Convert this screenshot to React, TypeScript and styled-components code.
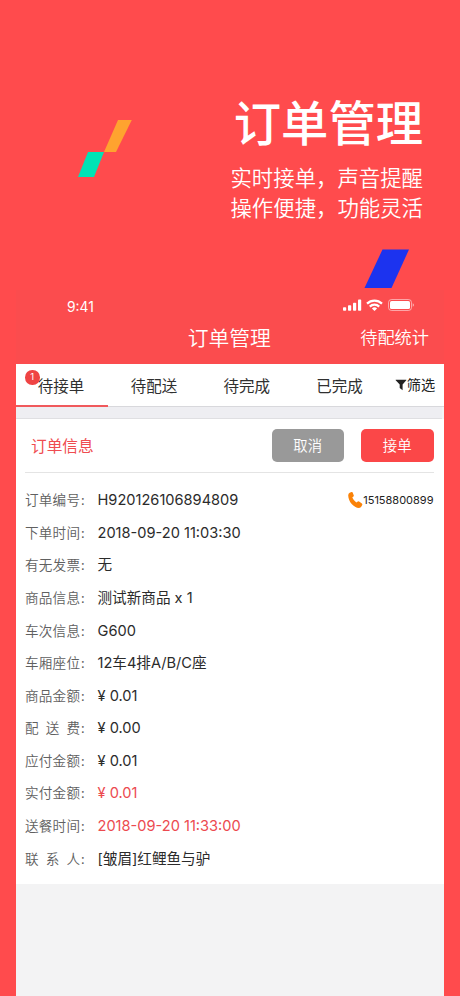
import React from "react";
import styled, { createGlobalStyle } from "styled-components";

const GlobalStyle = createGlobalStyle`
  * { box-sizing: border-box; }
  body {
    margin: 0;
    background: #ff4b4d;
    font-family: Inter, "Noto Sans CJK SC", sans-serif;
    overflow: hidden;
  }
`;

const Page = styled.main`
  position: relative;
  width: 460px;
  height: 996px;
  overflow: hidden;
  background: #ff4b4d;
`;

const Hero = styled.header`
  height: 290px;
  padding: 91px 37px 0 0;
  text-align: right;
  color: #fff;
  white-space: nowrap;
`;

const HeroTitle = styled.h1`
  margin: 0;
  font-size: 47.3px;
  font-weight: 500;
  line-height: 60px;
  font-family: "Noto Sans CJK SC", sans-serif;
`;

const HeroText = styled.p`
  margin: 11px 0 0;
  font-size: 21.4px;
  line-height: 30px;
  font-weight: 350;
  font-family: "Noto Sans CJK SC", sans-serif;
`;

const Shapes = styled.svg`
  position: absolute;
  left: 0;
  top: 0;
`;

const Phone = styled.section`
  width: 428.5px;
  height: 706px;
  margin-left: 15.5px;
  background: #f3f3f4;
`;

const TopBar = styled.div`
  height: 74px;
  background: #fb4c4e;
  color: #fff;
`;

const StatusBar = styled.div`
  display: flex;
  justify-content: space-between;
  align-items: center;
  height: 32px;
  padding: 0 29px 0 51.5px;
  font-size: 13.8px;
`;

const Clock = styled.span`
  padding-top: 1px;
`;

const NavBar = styled.div`
  display: grid;
  grid-template-columns: 1fr auto 1fr;
  align-items: center;
  height: 30px;
  padding-right: 15px;
  padding-left: 14px;
`;

const NavTitle = styled.h2`
  grid-column: 2;
  margin: 0;
  font-size: 20.8px;
  font-weight: 350;
  line-height: 30px;
  font-family: "Noto Sans CJK SC", sans-serif;
`;

const NavAction = styled.span`
  justify-self: end;
  font-size: 17.2px;
  font-weight: 350;
  line-height: 30px;
  font-family: "Noto Sans CJK SC", sans-serif;
`;

const Tabs = styled.nav`
  display: flex;
  height: 43px;
  background: #fff;
  border-bottom: 1px solid #d8d8dc;
`;

const Tab = styled.div<{ $active?: boolean }>`
  position: relative;
  width: 92.8px;
  height: 43px;
  padding-right: 1.6px;
  text-align: center;
  font-size: 15.5px;
  line-height: 45px;
  color: #303030;
  border-bottom: ${(p) => (p.$active ? "2px solid #f0595c" : "none")};
`;

const Badge = styled.span`
  position: absolute;
  left: 9.5px;
  top: 6px;
  width: 14.5px;
  height: 14.5px;
  border-radius: 50%;
  background: #ef4444;
  color: #fff;
  font-size: 9.5px;
  line-height: 14.5px;
`;

const Filter = styled.div`
  display: flex;
  align-items: center;
  margin-left: 8px;
  font-size: 14.2px;
  line-height: 44px;
  color: #222;
  white-space: nowrap;
`;

const Gap = styled.div`
  height: 12px;
  margin-right: 2px;
  background: #eeeef2;
  border-bottom: 1px solid #dfdfe2;
`;

const Card = styled.article`
  height: 465px;
  padding: 0 10.5px 0 9.5px;
  background: #fff;
`;

const CardHead = styled.div`
  display: flex;
  align-items: center;
  gap: 17px;
  height: 53.5px;
  padding-left: 6px;
  border-bottom: 1px solid #e4e4e4;
`;

const CardTitle = styled.h3`
  margin: 0 auto 0 0;
  font-size: 15.7px;
  font-weight: 400;
  color: #ef4c50;
`;

const Button = styled.button<{ $primary?: boolean }>`
  width: 72.5px;
  height: 33px;
  padding: 0;
  border: 0;
  border-radius: 5px;
  background: ${(p) => (p.$primary ? "#fb4748" : "#999")};
  color: #fff;
  font: 350 14.4px/32px "Noto Sans CJK SC", sans-serif;
`;

const Rows = styled.div`
  padding-top: 10.5px;
`;

const Row = styled.div`
  display: flex;
  align-items: center;
  height: 32.58px;
  line-height: 20px;
  white-space: nowrap;
`;

const Label = styled.div`
  display: flex;
  width: 72.5px;
  font-size: 13.6px;
  font-weight: 350;
  color: #606060;
  font-family: "Noto Sans CJK SC", sans-serif;
`;

const LabelText = styled.span`
  display: flex;
  justify-content: space-between;
  width: 55px;
  margin-right: 1px;
`;

const Value = styled.div<{ $red?: boolean }>`
  padding-top: 2px;
  font-size: 14.6px;
  line-height: 20px;
  color: ${(p) => (p.$red ? "#ec4a4f" : "#2b2b2b")};
`;

const PhoneLink = styled.div`
  display: flex;
  align-items: center;
  margin-left: auto;
  padding-top: 1px;
  font-size: 11px;
  color: #222;
`;

const tabs = ["待接单", "待配送", "待完成", "已完成"];

const rows: { label: string; value: string; red?: boolean; phone?: string }[] = [
  { label: "订单编号", value: "H920126106894809", phone: "15158800899" },
  { label: "下单时间", value: "2018-09-20 11:03:30" },
  { label: "有无发票", value: "无" },
  { label: "商品信息", value: "测试新商品 x 1" },
  { label: "车次信息", value: "G600" },
  { label: "车厢座位", value: "12车4排A/B/C座" },
  { label: "商品金额", value: "¥ 0.01" },
  { label: "配送费", value: "¥ 0.00" },
  { label: "应付金额", value: "¥ 0.01" },
  { label: "实付金额", value: "¥ 0.01", red: true },
  { label: "送餐时间", value: "2018-09-20 11:33:00", red: true },
  { label: "联系人", value: "[皱眉]红鲤鱼与驴" },
];

const StatusIcons = () => (
  <svg width="72" height="14" viewBox="0 0 72 14" fill="#fff">
    <rect x="0" y="8.2" width="3.2" height="3.5" rx="0.8" />
    <rect x="5" y="6.3" width="3.2" height="5.4" rx="0.8" />
    <rect x="10" y="3.8" width="3.2" height="7.9" rx="0.8" />
    <rect x="15" y="0.6" width="3.2" height="11.1" rx="0.8" />
    <g fill="none" stroke="#fff" strokeWidth="2.2">
      <path d="M24 4.6a10.7 10.7 0 0 1 15 0" />
      <path d="M26.8 7.6a6.700 6.700 0 0 1 9.400 0" />
    </g>
    <path d="M28.9 9.500a3.800 3.800 0 0 1 5.200 0L31.500 12.100z" />
    <rect x="45.5" y="0.5" width="23" height="11" rx="3" fill="none" stroke="#fff" strokeOpacity="0.5" />
    <rect x="47" y="2" width="20" height="8" rx="1.6" />
    <path d="M69.7 4.200v3.600q1.400-.6 1.400-1.800t-1.400-1.800z" fillOpacity="0.5" />
  </svg>
);

const FunnelIcon = () => (
  <svg width="12" height="12" viewBox="0 0 12 12" fill="#222">
    <path d="M.8.8h10.4q.4 0 .1.5L7.6 5.6v5.7L4.700 9.100V5.600L.7 1.300Q.4.8.8.8z" />
  </svg>
);

const CallIcon = () => (
  <svg width="15" height="16" viewBox="0 0 15 16" fill="#fa8208">
    <path d="M1.700.8 3.500.1q.9-.2 1.200.5l1.100 2.800q.2.8-.4 1.200L4.300 5.500q1.300 3.100 4 4.900l1.500-.9q.7-.4 1.300.1l2.800 2q.7.6.3 1.300l-.8 1.600q-.7 1.400-2.400 1.400C5.800 15.600.4 9.700.2 3.400Q.2 1.500 1.700.8z" />
  </svg>
);

export default function App() {
  return (
    <>
      <GlobalStyle />
      <Page>
        <Hero>
          <HeroTitle>订单管理</HeroTitle>
          <HeroText>
            实时接单，声音提醒
            <br />
            操作便捷，功能灵活
          </HeroText>
        </Hero>
        <Phone>
          <TopBar>
            <StatusBar>
              <Clock>9:41</Clock>
              <StatusIcons />
            </StatusBar>
            <NavBar>
              <NavTitle>订单管理</NavTitle>
              <NavAction>待配统计</NavAction>
            </NavBar>
          </TopBar>
          <Tabs>
            {tabs.map((tab, i) => (
              <Tab key={tab} $active={i === 0}>
                {i === 0 && <Badge>1</Badge>}
                {tab}
              </Tab>
            ))}
            <Filter>
              <FunnelIcon />
              筛选
            </Filter>
          </Tabs>
          <Gap />
          <Card>
            <CardHead>
              <CardTitle>订单信息</CardTitle>
              <Button>取消</Button>
              <Button $primary>接单</Button>
            </CardHead>
            <Rows>
              {rows.map((row) => (
                <Row key={row.label}>
                  <Label>
                    <LabelText>
                      {Array.from(row.label).map((ch, i) => (
                        <span key={i}>{ch}</span>
                      ))}
                    </LabelText>
                    :
                  </Label>
                  <Value $red={row.red}>{row.value}</Value>
                  {row.phone && (
                    <PhoneLink>
                      <CallIcon />
                      {row.phone}
                    </PhoneLink>
                  )}
                </Row>
              ))}
            </Rows>
          </Card>
        </Phone>
        <Shapes width="460" height="290" viewBox="0 0 460 290">
          <path d="M118 120h13.800L116 152h-12z" fill="#ffa32f" />
          <path d="M88 152h16L94 177H78z" fill="#00e3b5" />
          <path d="M382.500 249.500H409L391.500 288H364.500z" fill="#1c33ef" />
        </Shapes>
      </Page>
    </>
  );
}
